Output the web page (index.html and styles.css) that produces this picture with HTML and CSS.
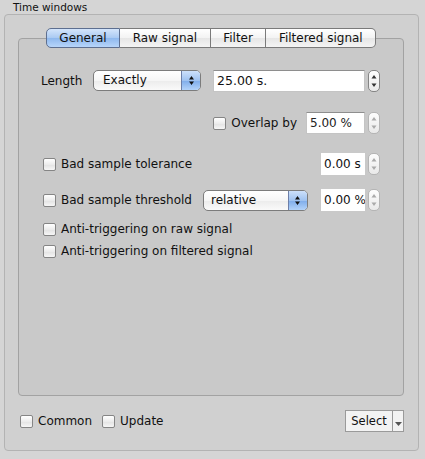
FILE: index.html
```html
<!DOCTYPE html>
<html>
<head>
<meta charset="utf-8">
<link rel="stylesheet" href="styles.css">
</head>
<body>
<div class="title">Time windows</div>
<div class="group">
  <div class="tabs">
    <div class="tab sel">General</div>
    <div class="tab">Raw signal</div>
    <div class="tab">Filter</div>
    <div class="tab last">Filtered signal</div>
  </div>
  <div class="panel">
    <div class="row r1">
      <span class="lbl">Length</span>
      <div class="popup p-len"><span class="ptxt">Exactly</span><span class="parr"><svg width="7" height="11" viewBox="0 0 7 11"><path d="M3.5 1 L6 4.5 L1 4.5 Z M3.5 10 L6 6.5 L1 6.5 Z" fill="#111"/></svg></span></div>
      <div class="field f-len">25.00 s.</div>
      <div class="stepper on"><svg width="12" height="22" viewBox="0 0 12 22"><path d="M6 5 L8.5 8.5 L3.5 8.5 Z M6 17 L8.5 13.5 L3.5 13.5 Z" fill="#333"/></svg></div>
    </div>
    <div class="row r2">
      <span class="cb"></span><span class="ctxt">Overlap by</span>
      <div class="field f-ov">5.00 %</div>
      <div class="stepper"><svg width="12" height="22" viewBox="0 0 12 22"><path d="M6 5 L8.5 8.5 L3.5 8.5 Z M6 17 L8.5 13.5 L3.5 13.5 Z" fill="#aaa"/></svg></div>
    </div>
    <div class="row r3">
      <span class="cb"></span><span class="ctxt">Bad sample tolerance</span>
      <span class="spacer"></span>
      <div class="field f-sm">0.00 s</div>
      <div class="stepper"><svg width="12" height="22" viewBox="0 0 12 22"><path d="M6 5 L8.5 8.5 L3.5 8.5 Z M6 17 L8.5 13.5 L3.5 13.5 Z" fill="#aaa"/></svg></div>
    </div>
    <div class="row r4">
      <span class="cb"></span><span class="ctxt">Bad sample threshold</span>
      <div class="popup p-rel"><span class="ptxt">relative</span><span class="parr"><svg width="7" height="11" viewBox="0 0 7 11"><path d="M3.5 1 L6 4.5 L1 4.5 Z M3.5 10 L6 6.5 L1 6.5 Z" fill="#111"/></svg></span></div>
      <span class="spacer"></span>
      <div class="field f-sm">0.00 %</div>
      <div class="stepper"><svg width="12" height="22" viewBox="0 0 12 22"><path d="M6 5 L8.5 8.5 L3.5 8.5 Z M6 17 L8.5 13.5 L3.5 13.5 Z" fill="#aaa"/></svg></div>
    </div>
    <div class="row r5">
      <span class="cb"></span><span class="ctxt">Anti-triggering on raw signal</span>
    </div>
    <div class="row r6">
      <span class="cb"></span><span class="ctxt">Anti-triggering on filtered signal</span>
    </div>
  </div>
  <div class="bottom">
    <span class="cb"></span><span class="ctxt">Common</span>
    <span class="cb cb2"></span><span class="ctxt">Update</span>
    <span class="spacer"></span>
    <div class="select"><span class="stxt">Select</span><span class="sarr"><svg width="7" height="4" viewBox="0 0 7 4"><path d="M0 0 L7 0 L3.5 4 Z" fill="#555"/></svg></span></div>
  </div>
</div>
</body>
</html>
```
FILE: styles.css
```css
html, body {
  margin: 0;
  padding: 0;
}
body {
  width: 425px;
  height: 459px;
  background: #d5d5d5;
  font-family: "DejaVu Sans", "Liberation Sans", sans-serif;
  font-size: 12px;
  color: #111;
  overflow: hidden;
}
.title {
  height: 14px;
  line-height: 14px;
  padding-left: 13px;
  font-size: 10.5px;
  color: #111;
}
.group {
  margin-left: 4px;
  width: 415px;
  box-sizing: border-box;
  border: 1px solid #b3b3b3;
  border-radius: 4px;
  background: #d0d0d0;
  padding: 13px 14px 18px 13px;
}
.tabs {
  display: flex;
  justify-content: center;
  height: 20px;
  position: relative;
  z-index: 2;
}
.tab {
  height: 20px;
  box-sizing: border-box;
  line-height: 18px;
  padding: 0 12.5px;
  border: 1px solid #7a7a7a;
  border-left: none;
  background: linear-gradient(#ffffff, #f3f3f3 50%, #e6e6e6 51%, #f4f4f4);
  color: #111;
}
.tab.sel {
  border-left: 1px solid #5a6f95;
  border-color: #5d6f90;
  border-radius: 5px 0 0 5px;
  background: linear-gradient(#d4e5fb, #a9c9f2 50%, #8eb8ee 51%, #b7d5fa);
}
.tab.last {
  border-radius: 0 5px 5px 0;
}
.panel {
  margin-top: -10px;
  height: 358px;
  box-sizing: border-box;
  border: 1px solid #a2a2a2;
  border-radius: 4px;
  background: #c9c9c9;
  padding: 30px 23px 0 22px;
  display: flex;
  flex-direction: column;
}
.row {
  display: flex;
  align-items: center;
}
.r1 { height: 23px; }
.r2 { height: 22px; margin-top: 20px; justify-content: flex-end; }
.r3 { height: 22px; margin-top: 19px; }
.r4 { height: 22px; margin-top: 14px; }
.r5 { height: 16px; margin-top: 10px; }
.r6 { height: 16px; margin-top: 6px; }
.spacer { flex: 1; }
.lbl {
  width: 52px;
}
.cb {
  width: 13px;
  height: 13px;
  box-sizing: border-box;
  border: 1px solid #858585;
  border-radius: 2px;
  background: linear-gradient(#ffffff, #ececec 50%, #e2e2e2 51%, #f6f6f6);
  flex: none;
}
.panel .r3 .cb, .panel .r4 .cb, .panel .r5 .cb, .panel .r6 .cb {
  margin-left: 2px;
}
.ctxt {
  margin-left: 5px;
}
.popup {
  display: flex;
  height: 21px;
  box-sizing: border-box;
  border: 1px solid #7c7c7c;
  border-radius: 5px;
  background: linear-gradient(#ffffff, #f6f6f6 50%, #ececec 51%, #fafafa);
  overflow: hidden;
}
.ptxt {
  flex: 1;
  line-height: 19px;
  padding-left: 9px;
}
.parr {
  width: 18px;
  border-left: 1px solid #6d7fa8;
  background: linear-gradient(#cde0fa, #9fc2f0 50%, #7eacea 51%, #b3d3fa);
  display: flex;
  align-items: center;
  justify-content: center;
}
.p-len { width: 108px; margin-left: 0; }
.p-rel { width: 105px; margin-left: 11px; }
.p-rel .ptxt { padding-left: 7px; }
.field {
  height: 22px;
  box-sizing: border-box;
  background: #fff;
  border: 1px solid #c4c4c4;
  border-top-color: #8e8e8e;
  line-height: 20px;
  padding-left: 3px;
  white-space: nowrap;
  overflow: hidden;
}
.f-len { width: 152px; margin-left: 12px; font-size: 12.5px; }
.f-ov { width: 59px; margin-left: 9px; color: #222; }
.f-sm { width: 44px; border: none; padding-left: 3px; line-height: 22px; }
.stepper {
  width: 12px;
  height: 22px;
  box-sizing: border-box;
  border: 1px solid #b5b5b5;
  border-radius: 5px;
  background: linear-gradient(#fdfdfd, #e9e9e9);
  margin-left: 3px;
  position: relative;
  overflow: hidden;
}
.stepper.on {
  border-color: #858585;
}
.stepper svg {
  position: absolute;
  left: -1px;
  top: -1px;
}
.bottom {
  display: flex;
  align-items: center;
  height: 22px;
  margin-top: 14px;
}
.bottom .cb { margin-left: 2px; }
.bottom .cb2 { margin-left: 10px; }
.select {
  display: flex;
  height: 22px;
  width: 59px;
  box-sizing: border-box;
  border: 1px solid #9a9a9a;
  background: #f3f3f3;
}
.stxt {
  width: 46px;
  text-align: center;
  line-height: 20px;
  font-size: 11.5px;
  border-right: 1px solid #9a9a9a;
}
.sarr {
  flex: 1;
  display: flex;
  justify-content: center;
  align-items: flex-end;
  padding-bottom: 5px;
}
```
